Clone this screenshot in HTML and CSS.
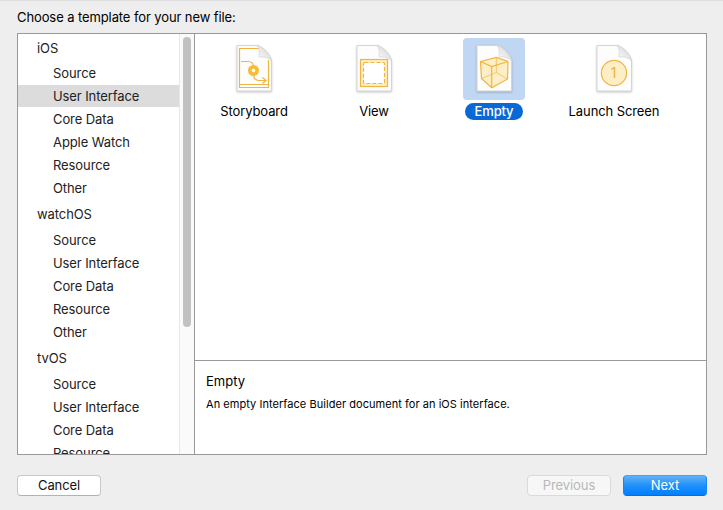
FILE: index.html
```html
<!DOCTYPE html>
<html lang="en">
<head>
<meta charset="utf-8">
<title>New File</title>
<link rel="stylesheet" href="styles.css">
</head>
<body>
<main class="sheet">
  <h1 class="prompt"><span>Choose a template for your new file:</span></h1>
  <div class="panel">
    <nav class="sidebar">
      <div class="list">
        <h2 class="group first">iOS</h2>
        <ul>
          <li>Source</li>
          <li class="selected">User Interface</li>
          <li>Core Data</li>
          <li>Apple Watch</li>
          <li>Resource</li>
          <li>Other</li>
        </ul>
        <h2 class="group">watchOS</h2>
        <ul>
          <li>Source</li>
          <li>User Interface</li>
          <li>Core Data</li>
          <li>Resource</li>
          <li>Other</li>
        </ul>
        <h2 class="group">tvOS</h2>
        <ul>
          <li>Source</li>
          <li>User Interface</li>
          <li>Core Data</li>
          <li>Resource</li>
        </ul>
      </div>
      <div class="scroller"><div class="thumb"></div></div>
    </nav>
    <div class="content">
      <svg class="defs" width="0" height="0">
        <linearGradient id="curl" x1="0" y1="1" x2="0.7" y2="0.2">
          <stop offset="0" stop-color="#fff"/>
          <stop offset="1" stop-color="#dcdcdc"/>
        </linearGradient>
      </svg>
      <div class="templates">
        <div class="template">
          <div class="tile">
            <svg class="icon" viewBox="0 0 40 50">
              <path class="page" d="M3 1.5H23C29 2.500 36.500 11 37.500 17V47H3Z"/>
              <path class="line" d="M5.500 4V44M5 4.500H25M34.500 16V44M5 40.500H35M5 43.500H35"/>
              <path class="line" d="M7 17.500H14C17.500 17.500 19.500 19 19.500 23M19.500 30C19.500 34.500 21.500 36.500 25 36.500H32M28.500 33.500L32 36.500L28.500 39.500"/>
              <circle class="node" cx="19.500" cy="26.500" r="3.700"/>
              <path class="fold" d="M23 1.5C25.500 4 25.500 8 25 13C30 12.500 35 13.500 37.500 17C36.500 11 29 2.500 23 1.500Z"/>
            </svg>
          </div>
          <span class="name">Storyboard</span>
        </div>
        <div class="template">
          <div class="tile">
            <svg class="icon" viewBox="0 0 40 50">
              <path class="page" d="M3 1.5H23C29 2.500 36.500 11 37.500 17V47H3Z"/>
              <path class="fold" d="M23 1.5C25.500 4 25.500 8 25 13C30 12.500 35 13.500 37.500 17C36.500 11 29 2.500 23 1.500Z"/>
              <rect class="line cream" x="6.500" y="15.500" width="27" height="27"/>
              <rect class="line dashed" x="9.500" y="18.500" width="21" height="21" rx="1"/>
            </svg>
          </div>
          <span class="name">View</span>
        </div>
        <div class="template chosen">
          <div class="tile">
            <svg class="icon" viewBox="0 0 40 50">
              <path class="page" d="M3 1.5H23C29 2.500 36.500 11 37.500 17V47H3Z"/>
              <path class="fold" d="M23 1.5C25.500 4 25.500 8 25 13C30 12.500 35 13.500 37.500 17C36.500 11 29 2.500 23 1.500Z"/>
              <path class="line cream" d="M6.500 17.500L22.300 13.500L34 17.500L33.500 35L17.700 43.700L7.500 34.500Z"/>
              <path class="line thin" d="M22.300 13.500V28.500L7.500 34.500M22.300 28.500L33.500 35"/>
              <path class="line" d="M6.500 17.500L17.700 22.500L34 17.500M17.700 22.500V43.700"/>
            </svg>
          </div>
          <span class="name">Empty</span>
        </div>
        <div class="template">
          <div class="tile">
            <svg class="icon" viewBox="0 0 40 50">
              <path class="page" d="M3 1.5H23C29 2.500 36.500 11 37.500 17V47H3Z"/>
              <path class="fold" d="M23 1.5C25.500 4 25.500 8 25 13C30 12.500 35 13.500 37.500 17C36.500 11 29 2.500 23 1.500Z"/>
              <circle class="line cream" cx="20" cy="29" r="12.600"/>
              <text class="digit" x="19.500" y="34">1</text>
            </svg>
          </div>
          <span class="name">Launch Screen</span>
        </div>
      </div>
      <section class="detail">
        <h3><span>Empty</span></h3>
        <p><span>An empty Interface Builder document for an iOS interface.</span></p>
      </section>
    </div>
  </div>
  <footer class="actions">
    <button class="button">Cancel</button>
    <button class="button previous" disabled>Previous</button>
    <button class="button next">Next</button>
  </footer>
</main>
</body>
</html>
```
FILE: styles.css
```css
* { box-sizing: border-box; }
body {
  margin: 0;
  background: #eeeeee;
  color: #000;
  font: 13px/16px Inter, "Liberation Sans", sans-serif;
}
h1, h2, h3, p, ul { margin: 0; padding: 0; font-size: 13px; font-weight: 400; list-style: none; }
.sheet {
  height: 510px;
  padding: 0 16px 0 17px;
  border-top: 1px solid #dedede;
  overflow: hidden;
}
.prompt { height: 32px; padding-top: 8px; letter-spacing: -0.1px; }
.panel {
  display: flex;
  height: 422px;
  border: 1px solid #999;
  background: #fff;
}
.sidebar { display: flex; width: 177px; border-right: 1px solid #999; overflow: hidden; }
.list { width: 161px; height: 420px; overflow: hidden; color: #222; letter-spacing: -0.09px; }
.group { height: 29px; padding-left: 19px; line-height: 29px; }
.group.first { height: 28px; line-height: 28px; }
li { height: 23px; padding-left: 35px; line-height: 23px; }
.selected { background: #dcdcdc; border-bottom: 1px solid #fff; }
.scroller { width: 15px; padding: 3px 3px 0; background: #fafafa; border-left: 1px solid #e8e8e8; }
.thumb { width: 8px; height: 290px; border-radius: 4px; background: #c1c1c1; }
.content { flex: 1; display: flex; flex-direction: column; }
.defs { display: block; }
.templates { display: flex; height: 327px; padding-top: 4px; border-bottom: 1px solid #999; }
.template { display: flex; flex-direction: column; align-items: center; width: 120px; }
.template:first-child { margin-left: -1px; }
.tile { width: 62px; height: 62px; padding: 6px 11px; border-radius: 4px; }
.chosen .tile { background: #bfd7f2; }
.name { height: 17px; margin-top: 3px; padding: 0 10px; border-radius: 9px; line-height: 17px; letter-spacing: -0.1px; white-space: nowrap; }
.chosen .name { padding: 0 9.5px; background: #0869d6; color: #fff; font-weight: 500; letter-spacing: -0.15px; }
.icon { display: block; width: 40px; height: 50px; }
.page { fill: #fdfdfd; stroke: #d4d4d4; filter: drop-shadow(0 1px 1px #0003); }
.fold { fill: url(#curl); stroke: #cfcfcf; stroke-width: .6; }
.line { fill: none; stroke: #f0b440; stroke-width: 1.2; }
.line.cream { fill: #fdefc5; }
.line.thin { stroke-width: .7; }
.line.dashed { fill: #fff; stroke-dasharray: 4 2; }
.node { fill: #fff; stroke: #f8bc3c; stroke-width: 3.7; }
.digit { fill: #ecb03d; font-size: 14px; text-anchor: middle; }
.detail { padding: 12px 11px; }
.detail p { margin-top: 8px; font-size: 11px; line-height: 14px; letter-spacing: 0.045px; }
.actions { display: flex; padding-top: 20px; }
.button {
  width: 84px;
  height: 21px;
  padding: 0;
  border: 1px solid #c8c8c8;
  border-bottom-color: #b2b2b2;
  border-radius: 4px;
  background: #fff;
  color: #111;
  font: inherit;
  line-height: 19px;
  letter-spacing: -0.1px;
}
.previous { margin-left: auto; background: #f7f7f7; border-color: #dadada; color: #b8b8b8; }
.next { margin-left: 12px; border-color: #4aa3f0 #1683f8 #066be5; background: linear-gradient(#62b2f8, #1f90fa 50%, #007fff); color: #fff; }
```
